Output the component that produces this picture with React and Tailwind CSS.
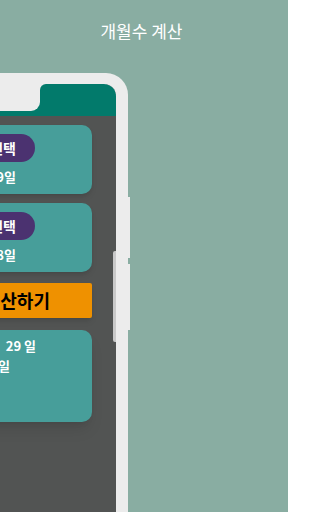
const font = { fontFamily: '"Noto Sans CJK KR", "Noto Sans", sans-serif' };

const DateCard = ({ label, date }) => (
    <div className="mx-[24px] h-[69px] rounded-[10px] bg-[#479e9a] shadow-md flex flex-col items-end pt-[9px]">
        <div className="mr-[57px] h-[28px] rounded-full bg-[#4b3270] pl-[18px] pr-[19px] flex items-center text-[14px] font-bold text-white leading-none">
            {label}
        </div>
        <div className="pr-[76px] mt-[6px] text-[13px] font-bold text-white leading-[18px]">{date}</div>
    </div>
);

const App = () => {
    return (
        <div className="w-[288px] h-[512px] overflow-hidden bg-[#89ada2] flex flex-col" style={font}>
            <div className="h-[73px] pt-[19px] pr-[5px] text-center text-[17px] leading-[24px] text-white">개월수 계산</div>

            <div className="relative -ml-[128px] w-[256px] flex-1 bg-[#ececec] rounded-t-[22px] pt-[11px] px-[12px] flex flex-col">
                {/* side buttons */}
                <div className="absolute right-[-2px] top-[124px] w-[2px] h-[61px] bg-[#ececec]" />
                <div className="absolute right-[-2px] top-[191px] w-[2px] h-[66px] bg-[#ececec]" />

                <div className="relative flex-1 bg-[#525453] rounded-tr-[12px] flex flex-col overflow-hidden">
                    <div className="h-[32px] bg-[#027a6b] rounded-tr-[12px] flex">
                        <div className="w-[156px] h-[27px] bg-[#ececec] rounded-br-[9px]" />
                        <div className="flex-1 bg-[#ececec] rounded-tr-[12px]">
                            <div className="h-full bg-[#027a6b] rounded-tl-[6px] rounded-tr-[12px]" />
                        </div>
                    </div>

                    <div className="flex flex-col pt-[9px]">
                        <DateCard label="시작일 선택" date="2024년 1월 29일" />
                        <div className="h-[9px]" />
                        <DateCard label="종료일 선택" date="2024년 3월 28일" />

                        <div className="mx-[24px] mt-[11px] h-[35px] bg-[#ef9100] rounded-[2px] shadow-md flex items-center justify-end pr-[42px] text-[18px] font-bold text-black">
                            계산하기
                        </div>

                        <div className="mx-[24px] mt-[12px] h-[92px] rounded-[10px] bg-[#479e9a] shadow-lg flex flex-col items-end pt-[7px] text-[13px] font-bold text-white leading-[18px]">
                            <div className="pr-[56px] w-max flex gap-[16px] whitespace-nowrap">
                                <span>1 개월</span>
                                <span>29 일</span>
                            </div>
                            <div className="pr-[82px] mt-[2px] w-max whitespace-nowrap">총 59 일</div>
                        </div>
                    </div>

                    <div className="absolute right-0 top-[167px] w-[3px] h-[91px] rounded-l-[2px] bg-[#c9c9c9]" />
                </div>
            </div>
        </div>
    );
};

export default App;
